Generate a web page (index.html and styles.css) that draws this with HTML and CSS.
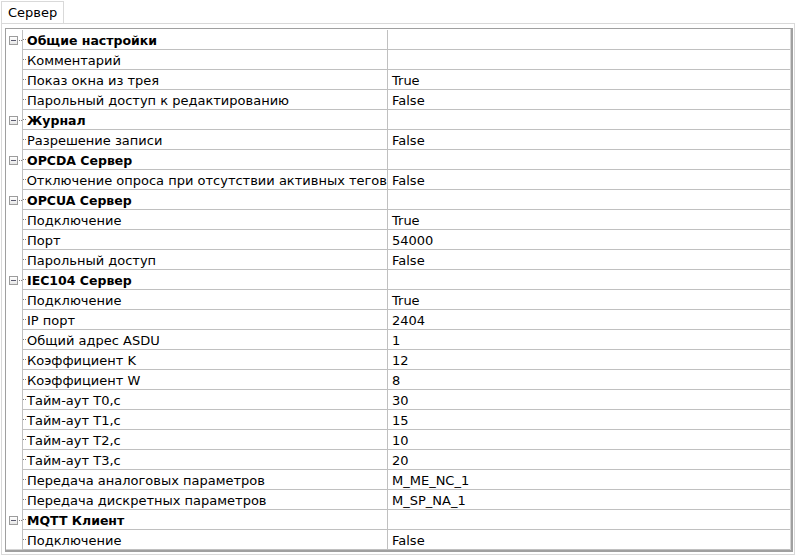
FILE: index.html
```html
<!DOCTYPE html>
<html lang="ru">
<head>
<meta charset="utf-8">
<link rel="stylesheet" href="styles.css">
</head>
<body>
<div class="tabs"><div class="tab">Сервер</div></div>
<div class="panel">
  <div class="grid">
    <div class="row cat"><span class="gut"><i class="box"></i><i class="dash"></i></span><span class="name"><i class="tick"></i>Общие настройки</span><span class="val"></span></div>
    <div class="row"><span class="gut"></span><span class="name"><i class="tick"></i>Комментарий</span><span class="val"></span></div>
    <div class="row"><span class="gut"></span><span class="name"><i class="tick"></i>Показ окна из трея</span><span class="val">True</span></div>
    <div class="row"><span class="gut"></span><span class="name"><i class="tick"></i>Парольный доступ к редактированию</span><span class="val">False</span></div>
    <div class="row cat"><span class="gut"><i class="box"></i><i class="dash"></i></span><span class="name"><i class="tick"></i>Журнал</span><span class="val"></span></div>
    <div class="row"><span class="gut"></span><span class="name"><i class="tick"></i>Разрешение записи</span><span class="val">False</span></div>
    <div class="row cat"><span class="gut"><i class="box"></i><i class="dash"></i></span><span class="name"><i class="tick"></i>OPCDA Сервер</span><span class="val"></span></div>
    <div class="row"><span class="gut"></span><span class="name"><i class="tick"></i>Отключение опроса при отсутствии активных тегов</span><span class="val">False</span></div>
    <div class="row cat"><span class="gut"><i class="box"></i><i class="dash"></i></span><span class="name"><i class="tick"></i>OPCUA Сервер</span><span class="val"></span></div>
    <div class="row"><span class="gut"></span><span class="name"><i class="tick"></i>Подключение</span><span class="val">True</span></div>
    <div class="row"><span class="gut"></span><span class="name"><i class="tick"></i>Порт</span><span class="val">54000</span></div>
    <div class="row"><span class="gut"></span><span class="name"><i class="tick"></i>Парольный доступ</span><span class="val">False</span></div>
    <div class="row cat"><span class="gut"><i class="box"></i><i class="dash"></i></span><span class="name"><i class="tick"></i>IEC104 Сервер</span><span class="val"></span></div>
    <div class="row"><span class="gut"></span><span class="name"><i class="tick"></i>Подключение</span><span class="val">True</span></div>
    <div class="row"><span class="gut"></span><span class="name"><i class="tick"></i>IP порт</span><span class="val">2404</span></div>
    <div class="row"><span class="gut"></span><span class="name"><i class="tick"></i>Общий адрес ASDU</span><span class="val">1</span></div>
    <div class="row"><span class="gut"></span><span class="name"><i class="tick"></i>Коэффициент K</span><span class="val">12</span></div>
    <div class="row"><span class="gut"></span><span class="name"><i class="tick"></i>Коэффициент W</span><span class="val">8</span></div>
    <div class="row"><span class="gut"></span><span class="name"><i class="tick"></i>Тайм-аут T0,c</span><span class="val">30</span></div>
    <div class="row"><span class="gut"></span><span class="name"><i class="tick"></i>Тайм-аут T1,c</span><span class="val">15</span></div>
    <div class="row"><span class="gut"></span><span class="name"><i class="tick"></i>Тайм-аут T2,c</span><span class="val">10</span></div>
    <div class="row"><span class="gut"></span><span class="name"><i class="tick"></i>Тайм-аут T3,c</span><span class="val">20</span></div>
    <div class="row"><span class="gut"></span><span class="name"><i class="tick"></i>Передача аналоговых параметров</span><span class="val">M_ME_NC_1</span></div>
    <div class="row"><span class="gut"></span><span class="name"><i class="tick"></i>Передача дискретных параметров</span><span class="val">M_SP_NA_1</span></div>
    <div class="row cat"><span class="gut"><i class="box"></i><i class="dash"></i></span><span class="name"><i class="tick"></i>MQTT Клиент</span><span class="val"></span></div>
    <div class="row"><span class="gut"></span><span class="name"><i class="tick"></i>Подключение</span><span class="val">False</span></div>
  </div>
</div>
</body>
</html>
```
FILE: styles.css
```css
html, body {
  margin: 0;
  padding: 0;
  background: #ffffff;
}
body {
  width: 796px;
  height: 557px;
  font-family: "DejaVu Sans", Verdana, sans-serif;
  font-size: 13px;
  color: #000000;
  overflow: hidden;
}
.tabs {
  display: flex;
  padding-left: 1px;
  padding-top: 1px;
  height: 22px;
}
.tab {
  width: 63px;
  height: 22px;
  border: 1px solid #d9d9d9;
  border-bottom: none;
  box-sizing: border-box;
  background: #ffffff;
  padding-left: 6px;
  padding-top: 2px;
  line-height: 17px;
}
.panel {
  margin-left: 1px;
  width: 794px;
  height: 532px;
  box-sizing: border-box;
  border: 1px solid #d9d9d9;
  padding: 4px 1px 1px 3px;
}
.grid {
  border-style: solid;
  border-color: #a0a0a0;
  border-width: 1px 2px 2px 1px;
  padding: 1px 1px 1px 0;
  box-shadow: inset -1px -1px 0 #d4d4d4;
  height: 524px;
  box-sizing: border-box;
}
.row {
  display: grid;
  grid-template-columns: 16px 365px 1fr;
  height: 20px;
}
.gut {
  display: flex;
  align-items: center;
  padding-left: 3px;
}
.box {
  display: block;
  width: 9px;
  height: 9px;
  box-sizing: border-box;
  border: 1px solid #9c9c9c;
  background: linear-gradient(#ffffff, #e6e6e6);
  position: relative;
}
.box::after {
  content: "";
  position: absolute;
  left: 1px;
  top: 3px;
  width: 5px;
  height: 1px;
  background: #5a5a6e;
}
.dash {
  display: block;
  width: 3px;
  height: 1px;
  margin-left: 1px;
  background: repeating-linear-gradient(90deg, #808080 0 1px, transparent 1px 2px);
}
.name, .val {
  border-left: 1px solid #c0c0c0;
  border-bottom: 1px solid #c0c0c0;
  height: 19px;
  line-height: 19px;
  padding-top: 1px;
  box-sizing: content-box;
  white-space: nowrap;
  overflow: hidden;
}
.row > .name, .row > .val {
  height: 18px;
}
.name {
  display: flex;
  align-items: center;
}
.tick {
  display: block;
  width: 3px;
  height: 1px;
  margin-right: 1px;
  margin-top: -1px;
  background: repeating-linear-gradient(90deg, #808080 0 1px, transparent 1px 2px);
}
.val {
  padding-left: 4px;
}
.cat .name {
  font-weight: bold;
  font-size: 12.5px;
}
```
